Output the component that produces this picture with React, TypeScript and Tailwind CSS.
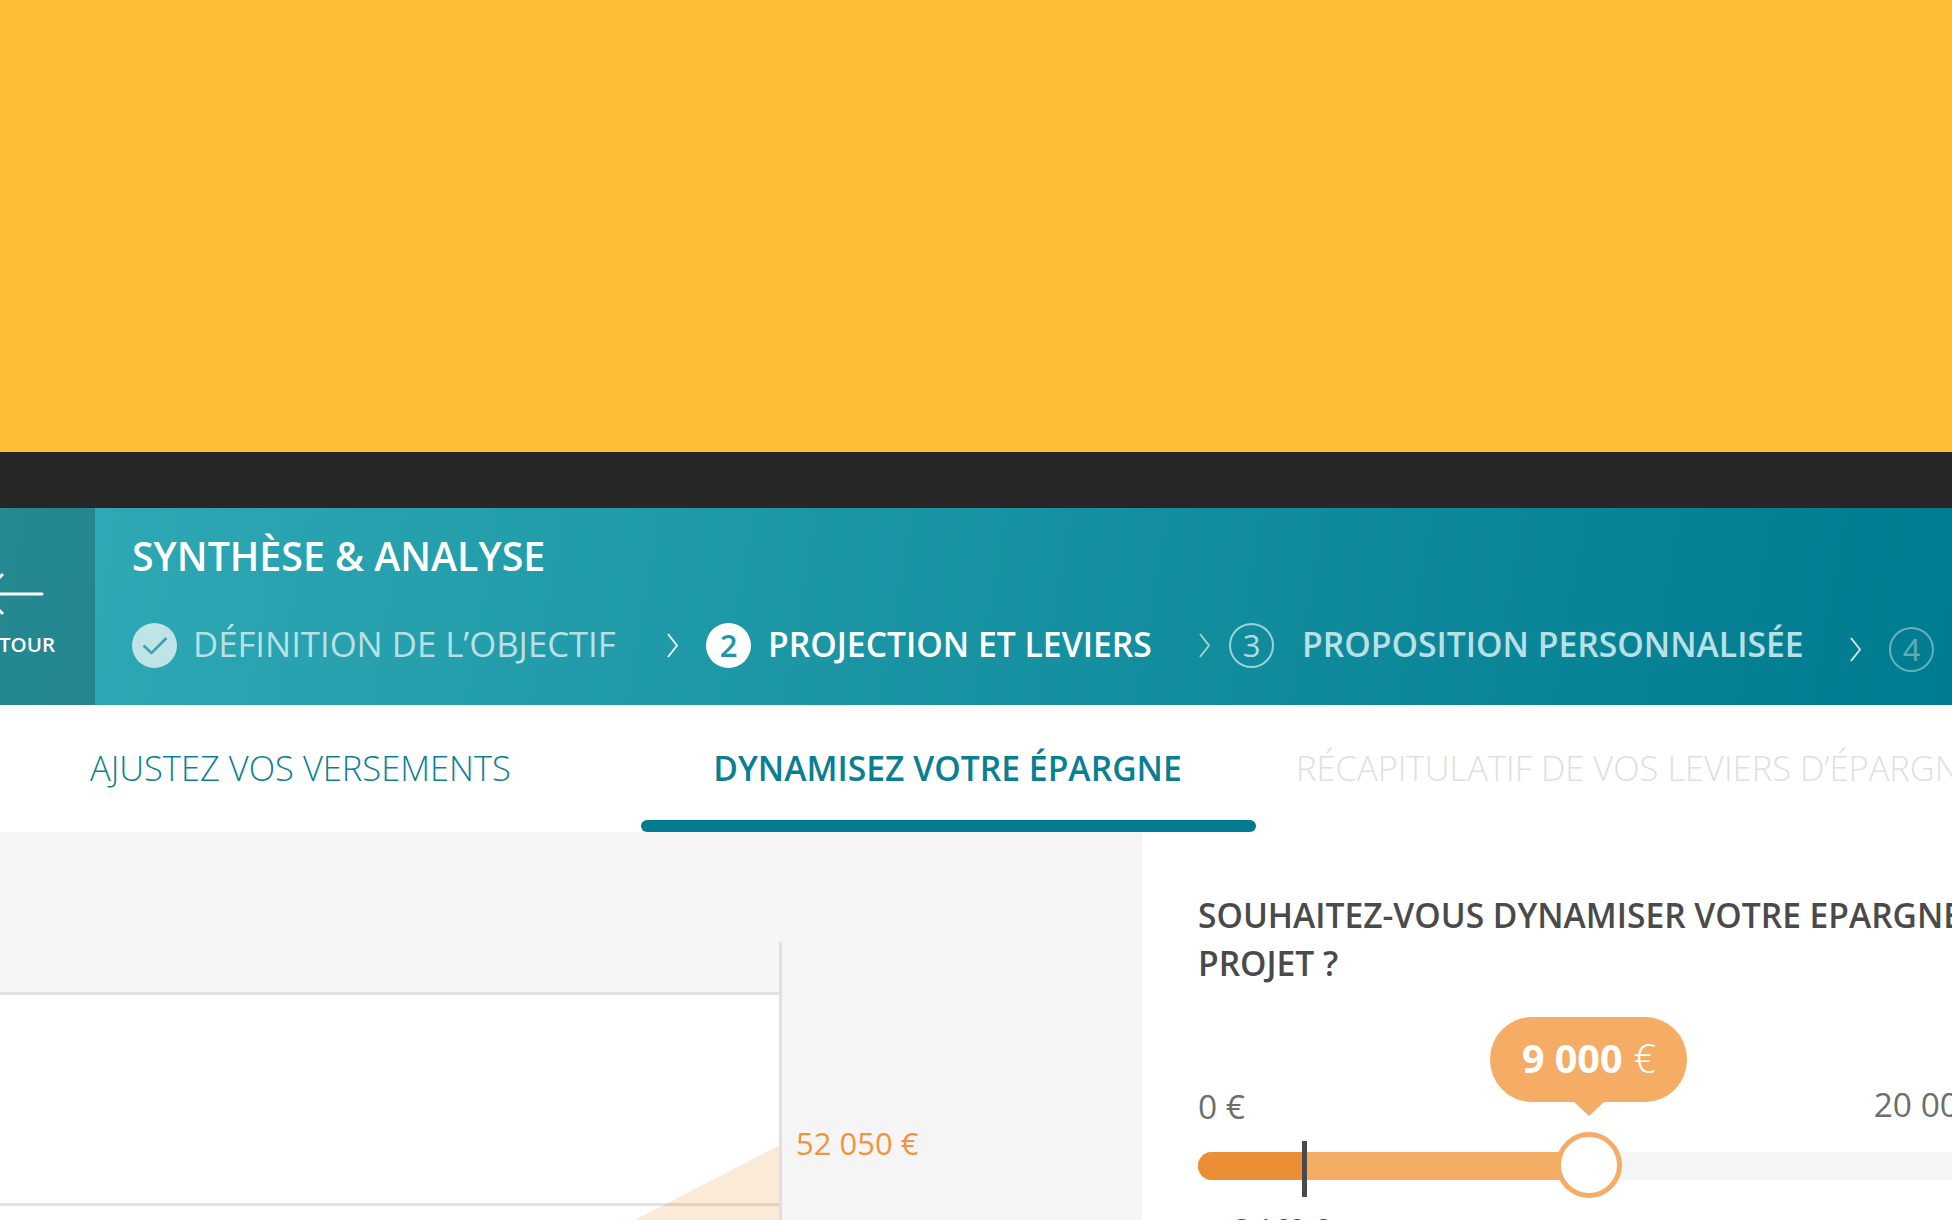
export default function App() {
  return (
    <div className="flex h-[1220px] w-[1952px] flex-col overflow-hidden bg-white font-['Open_Sans',sans-serif]">
      <div className="h-[452px] shrink-0 bg-[#fcbd37]" />
      <div className="h-[56px] shrink-0 bg-[#272727]" />
      <Header />
      <Tabs />
      <div className="flex h-[388px] shrink-0">
        <Chart />
        <Controls />
      </div>
    </div>
  );
}

function Header() {
  return (
    <div className="flex h-[197px] shrink-0 bg-[linear-gradient(100deg,#30aab5,#007b8f)]">
      <div className="flex w-[95px] shrink-0 flex-col bg-[#000000]/20 pt-[62px]">
        <svg width="55" height="50" viewBox="0 0 55 50" className="shrink-0">
          <path d="M0 24H42" stroke="#fff" strokeWidth="3" strokeLinecap="round" fill="none" />
          <path d="M3 4L-17 24L3 44" stroke="#fff" strokeWidth="3" fill="none" />
        </svg>
        <div className="mt-[10px] flex h-[28px] w-[55px] justify-end overflow-hidden whitespace-nowrap text-[20.5px] leading-[28px] font-semibold text-white">
          RETOUR
        </div>
      </div>
      <div className="flex min-w-0 flex-1 flex-col pl-[37px]">
        <div className="mt-[26px] h-[44px] whitespace-nowrap text-[39.3px] leading-[44px] font-semibold text-white">
          SYNTHÈSE &amp; ANALYSE
        </div>
        <div className="mt-[45px] flex h-[45px] items-center whitespace-nowrap text-[34.7px] text-[#b9e0e4]">
          <div className="flex h-[45px] w-[45px] shrink-0 items-center justify-center rounded-full bg-[#bfe4e7]">
            <svg width="26" height="20" viewBox="0 0 26 20">
              <path d="M1.5 9.5L9.5 17L24.5 2" stroke="#3aa3b0" strokeWidth="2.5" fill="none" />
            </svg>
          </div>
          <span className="ml-[16px] w-[423px] pb-[2px]">DÉFINITION DE L’OBJECTIF</span>
          <Chevron className="ml-[51px] opacity-90" />
          <div className="ml-[28px] flex h-[45px] w-[45px] shrink-0 items-center justify-center rounded-full bg-white text-[31px] font-semibold text-[#1e96a5]">
            2
          </div>
          <span className="ml-[17px] w-[383px] pb-[2px] text-[33.7px] font-semibold text-white">PROJECTION ET LEVIERS</span>
          <Chevron className="ml-[48px] opacity-60" />
          <div className="ml-[19px] flex h-[45px] w-[45px] shrink-0 items-center justify-center rounded-full border-2 border-white/60 text-[31px] text-white/70">
            3
          </div>
          <span className="ml-[28px] w-[498px] pb-[2px] text-[33.7px] font-semibold">PROPOSITION PERSONNALISÉE</span>
          <Chevron className="ml-[50px] mt-[8px] opacity-80" />
          <div className="ml-[28px] mt-[8px] flex h-[45px] w-[45px] shrink-0 items-center justify-center rounded-full border-2 border-white/40 text-[31px] text-white/40">
            4
          </div>
        </div>
      </div>
    </div>
  );
}

function Chevron({ className }: { className?: string }) {
  return (
    <svg width="11" height="25" viewBox="0 0 11 25" className={`shrink-0 ${className ?? ''}`}>
      <path d="M1 1L10 12.5L1 24" stroke="#fff" strokeWidth="2" fill="none" />
    </svg>
  );
}

function Tabs() {
  return (
    <div className="flex h-[127px] shrink-0 whitespace-nowrap text-[34.5px]">
      <div className="flex w-[641px] shrink-0 items-center pb-[2px] pl-[90px] font-light text-[#0d8193]">
        AJUSTEZ VOS VERSEMENTS
      </div>
      <div className="flex w-[615px] shrink-0 flex-col">
        <div className="flex flex-1 items-center justify-center pt-[11px] pr-[2px] text-[33.7px] font-semibold text-[#0a7f92]">
          DYNAMISEZ VOTRE ÉPARGNE
        </div>
        <div className="h-[12px] rounded-full bg-[#007b8f]" />
      </div>
      <div className="flex items-center pb-[2px] pl-[40px] font-light text-[#dfe0e0]">
        RÉCAPITULATIF DE VOS LEVIERS D’ÉPARGNE
      </div>
    </div>
  );
}

function Chart() {
  return (
    <div className="relative w-[1142px] shrink-0 bg-[#f5f5f5]">
      <svg width="1142" height="388" viewBox="0 0 1142 388">
        <rect x="0" y="161" width="780" height="227" fill="#fff" />
        <rect x="0" y="160" width="780" height="3" fill="#e2e2e2" />
        <rect x="0" y="371" width="780" height="3" fill="#e2e2e2" />
        <polygon points="780,313 780,388 635,388" fill="#f0953c" fillOpacity="0.2" />
        <rect x="779" y="110" width="3" height="278" fill="#e0e0e0" />
      </svg>
      <span className="absolute left-[796px] top-[291px] text-[31px] leading-[40px] whitespace-nowrap text-[#f0953c]">
        52 050 €
      </span>
    </div>
  );
}

function Controls() {
  return (
    <div className="min-w-0 flex-1 overflow-hidden pl-[56px] pt-[59px]">
      <div className="w-[1100px] text-[33.6px] leading-[48px] font-semibold text-[#4a4a4a]">
        SOUHAITEZ-VOUS DYNAMISER VOTRE EPARGNE POUR CE
        <br />
        PROJET ?
      </div>
      <div className="relative mt-[97px] w-[808px]">
        <div className="flex h-[44px] justify-between text-[33.5px] leading-[44px] text-[#6e6e6e]">
          <span>0 €</span>
          <span className="-mt-[2px]">20 000 €</span>
        </div>
        <div className="relative mt-[24px] h-[28px] rounded-l-full bg-[#f5f5f5]">
          <div className="flex h-[28px] w-[391px] overflow-hidden rounded-l-full bg-[#f5ad65]">
            <div className="w-[104px] bg-[#ea8f36]" />
          </div>
          <div className="absolute left-[104px] top-[-11px] h-[56px] w-[5px] bg-[#4a4a4a]" />
          <div className="absolute left-[358px] top-[-20px] h-[66px] w-[66px] rounded-full border-[5px] border-[#f5ad65] bg-white" />
        </div>
        <div className="absolute left-[292px] top-[-67px] flex h-[85px] w-[197px] items-center justify-center rounded-[42px] bg-[#f5ad65] pb-[2px] pl-[1px] text-[39.5px] text-white">
          <span className="font-bold">9 000</span>
          <span className="ml-[11px] font-light">€</span>
          <div className="absolute left-1/2 top-full -translate-x-1/2 border-x-[15px] border-t-[14px] border-x-transparent border-t-[#f5ad65]" />
        </div>
        <div className="mt-[28px] pl-[36px] text-[28px] leading-[40px] text-[#4a4a4a]">3 160 €</div>
      </div>
    </div>
  );
}
